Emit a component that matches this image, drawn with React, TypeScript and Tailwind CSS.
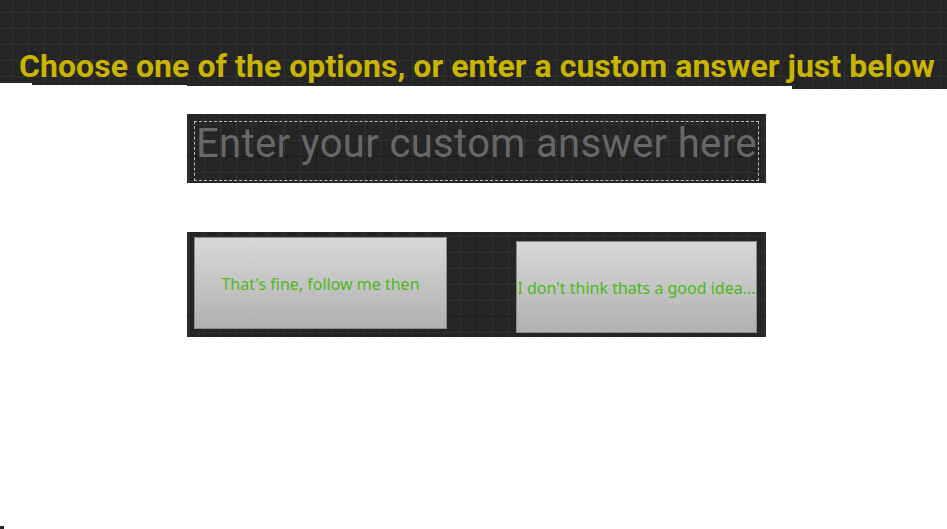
import React from "react";

const GRID =
  "bg-[#252525] bg-fixed [background-image:linear-gradient(to_right,#1b1b1b_1px,transparent_1px),linear-gradient(to_bottom,#1b1b1b_1px,transparent_1px),linear-gradient(to_right,#313131_1px,transparent_1px),linear-gradient(to_bottom,#313131_1px,transparent_1px)] [background-size:160px_160px,160px_160px,16px_16px,16px_16px] [background-position:156px_156px,156px_156px,12px_12px,12px_12px]";

export default function App() {
  return (
    <div className="relative w-[947px] h-[529px] bg-white overflow-hidden font-['Roboto',sans-serif]">
      {/* Header */}
      <div className={`${GRID} h-[83px] w-full`}>
        <div className="pt-[48px] pl-[19px] text-[32px] leading-[36px] tracking-[0.05px] font-bold text-[#c9b400] whitespace-nowrap">
          Choose one of the options, or enter a custom answer just below
        </div>
      </div>
      <div className="flex items-start h-[6px]">
        <div className="w-[32px]" />
        <div className={`${GRID} w-[155px] h-[2px]`} />
        <div className={`${GRID} w-[605px] h-[3px]`} />
        <div className={`${GRID} flex-1 h-[6px]`} />
      </div>

      {/* Custom answer input */}
      <div className="mt-[25px] ml-[187px] w-[579px]">
        <div className={`${GRID} h-[69px] pt-[7px] px-[7px]`}>
          <div className="h-[60px] border border-dashed border-[#bcbcbc] pt-[2px] pl-[1px] overflow-hidden">
            <div className="text-[40px] leading-[40px] tracking-[0.35px] text-[#676767] whitespace-nowrap">
              Enter your custom answer here
            </div>
          </div>
        </div>
      </div>

      {/* Options */}
      <div className="mt-[49px] ml-[187px] w-[579px]">
        <div className={`${GRID} h-[105px] flex items-start justify-between pl-[7px] pr-[9px]`}>
          <button className="mt-[5px] w-[253px] h-[92px] border border-[#8c8c8c] bg-gradient-to-b from-[#d8d8d8] to-[#b1b1b1] flex items-center justify-center overflow-hidden font-['Noto_Sans',sans-serif] text-[16px] text-[#4cba1a] whitespace-nowrap pt-[2px]">
            That's fine, follow me then
          </button>
          <button className="mt-[9px] w-[241px] h-[92px] border border-[#8c8c8c] bg-gradient-to-b from-[#d8d8d8] to-[#b1b1b1] flex items-center justify-center overflow-hidden font-['Noto_Sans',sans-serif] text-[16px] text-[#4cba1a] whitespace-nowrap pt-[2px]">
            I don't think thats a good idea...
          </button>
        </div>
      </div>

      <div className="absolute left-0 bottom-0 w-[4px] h-[3px] bg-[#252525]" />
    </div>
  );
}
